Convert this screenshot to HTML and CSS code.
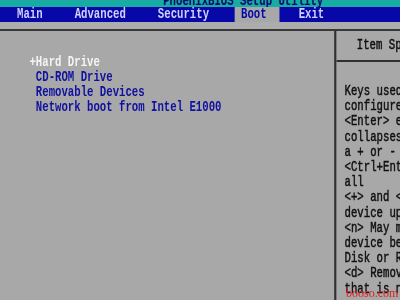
FILE: index.html
```html
<!DOCTYPE html>
<html lang="en">
<head>
    <meta charset="UTF-8">
    <title>PhoenixBIOS Setup Utility</title>
    <link rel="stylesheet" href="styles.css">
</head>
<body>
    <div class="screen">
        <div class="title">PhoenixBIOS Setup Utility</div>
        <div class="menu">
            <span class="tab">Main</span>
            <span class="tab">Advanced</span>
            <span class="tab">Security</span>
            <span class="tab active">Boot</span>
            <span class="tab">Exit</span>
        </div>
        <div class="strip"></div>
        <div class="frame">
            <div class="boot-list">
                <div class="item selected">+Hard Drive</div>
                <div class="item"> CD-ROM Drive</div>
                <div class="item"> Removable Devices</div>
                <div class="item"> Network boot from Intel E1000</div>
            </div>
            <div class="help">
                <div class="help-head">Item Specific Help</div>
                <div class="help-body">
                    <div>Keys used to view or</div>
                    <div>configure devices:</div>
                    <div>&lt;Enter&gt; expands or</div>
                    <div>collapses devices with</div>
                    <div>a + or -</div>
                    <div>&lt;Ctrl+Enter&gt; expands</div>
                    <div>all</div>
                    <div>&lt;+&gt; and &lt;-&gt; moves the</div>
                    <div>device up or down.</div>
                    <div>&lt;n&gt; May move removable</div>
                    <div>device between Hard</div>
                    <div>Disk or Removable Disk</div>
                    <div>&lt;d&gt; Remove a device</div>
                    <div>that is not installed.</div>
                </div>
            </div>
        </div>
    </div>
    <div class="watermark">booso.com</div>
</body>
</html>
```

FILE: styles.css
```css
body {
    margin: 0;
    width: 400px;
    height: 300px;
    overflow: hidden;
    background-color: #a8a8a8;
}
/* the BIOS font is narrow: lay out at Liberation Mono width, then squeeze */
.screen {
    width: 562.5px;
    height: 300px;
    transform: scaleX(0.7111);
    transform-origin: 0 0;
    font-family: "Liberation Mono", monospace;
    font-weight: bold;
    font-size: 15px;
    line-height: 15px;
}
.title {
    height: 7px;
    overflow: hidden;
    background-color: #18aca4;
    color: #08086a;
    padding-left: 25.5ch;
    line-height: 4px;
}
.menu {
    display: flex;
    height: 15px;
    background-color: #0808a8;
    padding-left: 1.66ch;
    color: #d0d0ff;
    line-height: 16px;
}
.tab {
    padding: 0 2ch 0 1ch;
    margin-right: 2ch;
}
.tab.active {
    background-color: #a8a8a8;
    color: #0808a8;
}
.strip {
    height: 7px;
    background-color: #acacac;
}
.frame {
    display: flex;
    border-top: 2px solid #383838;
    height: 270px;
}
.boot-list {
    width: 52.2ch;
    padding: 24px 0 0 4.6ch;
    box-sizing: border-box;
    color: #1010a0;
}
.item {
    white-space: pre;
}
.item.selected {
    color: #f4f4f4;
}
.help {
    flex: 1;
    border-left: 3px solid #303030;
    overflow: hidden;
    white-space: nowrap;
    color: #101010;
    font-weight: normal;
    -webkit-text-stroke: 0.5px #101010;
}
.help-head {
    height: 29px;
    border-bottom: 2px solid #303030;
    padding-left: 3.2ch;
    line-height: 30px;
}
.help-body {
    padding: 22px 0 0 1.3ch;
    line-height: 15.2px;
}
.watermark {
    position: absolute;
    left: 346px;
    top: 286px;
    font-family: "Liberation Serif", serif;
    font-size: 12px;
    color: #e02020;
}
```
